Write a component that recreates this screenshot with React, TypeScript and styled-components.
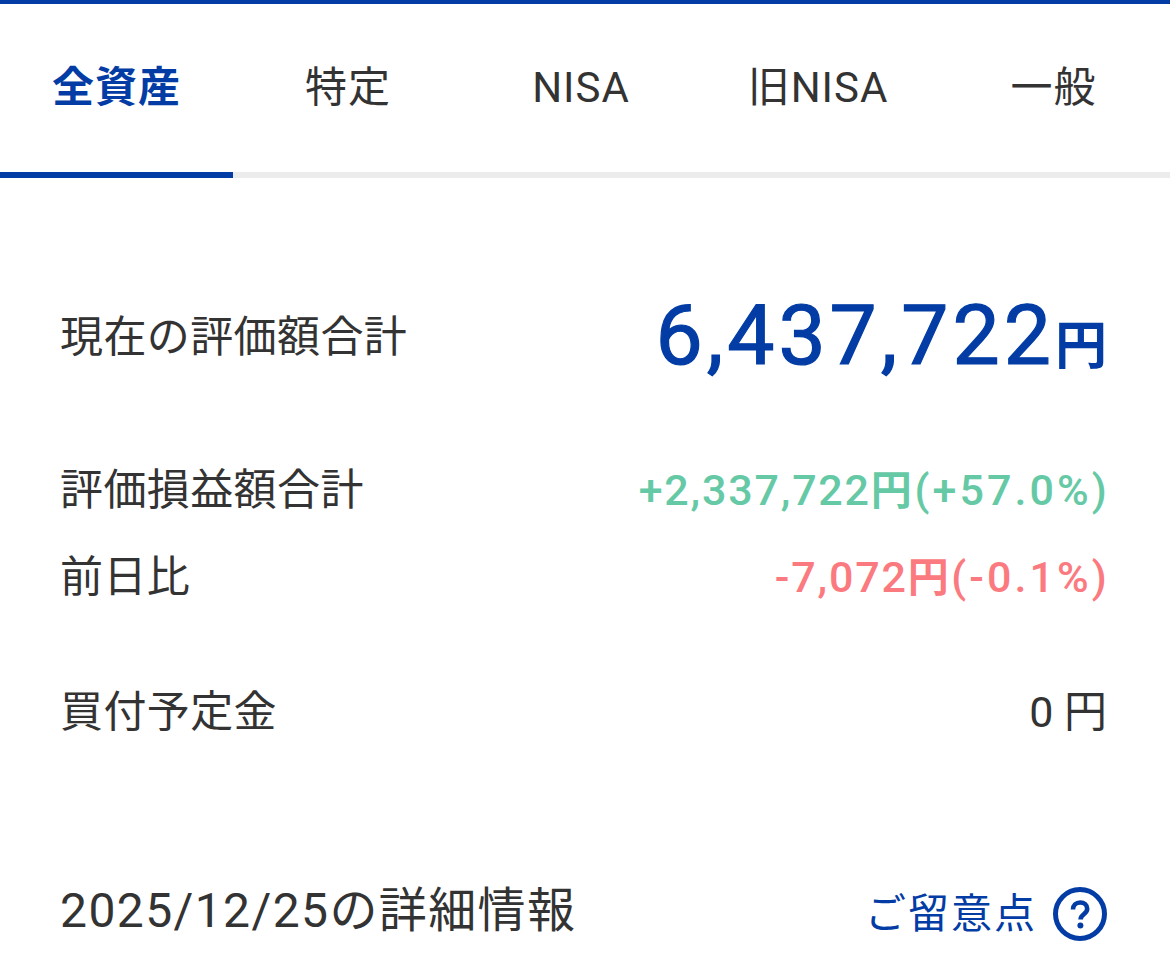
import React from "react";
import styled, { createGlobalStyle } from "styled-components";

const BLUE = "#023ca4";

const tabs = ["全資産", "特定", "NISA", "旧NISA", "一般"];

export default function App() {
  return (
    <Page>
      <GlobalStyle />
      <Tabs>
        {tabs.map((t, i) => (
          <Tab key={t} $active={i === 0}>
            {t}
          </Tab>
        ))}
      </Tabs>
      <Body>
        <TotalRow>
          <Label>現在の評価額合計</Label>
          <Total>
            6,437,722<TotalUnit>円</TotalUnit>
          </Total>
        </TotalRow>
        <GainRow>
          <Label>評価損益額合計</Label>
          <Change $color="#66c9a6">
            +2,337,722<Yen>円</Yen>
            <Percent>(+57.0%)</Percent>
          </Change>
        </GainRow>
        <DayRow>
          <Label>前日比</Label>
          <Change $color="#fb7a80">
            -7,072<Yen>円</Yen>
            <Percent>(-0.1%)</Percent>
          </Change>
        </DayRow>
        <PlanRow>
          <Label>買付予定金</Label>
          <Amount>0 円</Amount>
        </PlanRow>
        <DetailRow>
          <DetailTitle>2025/12/25の詳細情報</DetailTitle>
          <Notice>
            ご留意点
            <HelpIcon>
              <svg width="54" height="54" viewBox="0 0 54 54" fill="none">
                <circle cx="27" cy="27" r="24.5" stroke={BLUE} strokeWidth="5" />
                <path
                  d="M20 22.5c0-4 3-7 7.2-7 4 0 7 2.7 7 6.3 0 5.4-6.6 5.6-6.6 10.6"
                  stroke={BLUE}
                  strokeWidth="4.6"
                />
                <circle cx="27.4" cy="38.6" r="3" fill={BLUE} />
              </svg>
            </HelpIcon>
          </Notice>
        </DetailRow>
      </Body>
    </Page>
  );
}

const GlobalStyle = createGlobalStyle`
  html, body {
    margin: 0;
    padding: 0;
    background: #fff;
  }
`;

const Page = styled.div`
  width: 1170px;
  height: 970px;
  overflow: hidden;
  border-top: 4px solid ${BLUE};
  box-sizing: border-box;
  font-family: Roboto, "Noto Sans CJK JP", sans-serif;
  line-height: 60px;
  color: #333;
`;

const Tabs = styled.div`
  display: grid;
  grid-template-columns: 233px 230px 236px 238px 233px;
  height: 174px;
`;

const Tab = styled.div<{ $active: boolean }>`
  display: flex;
  align-items: center;
  justify-content: center;
  box-sizing: border-box;
  font-size: 42px;
  letter-spacing: 1px;
  font-weight: ${(p) => (p.$active ? 700 : 400)};
  color: ${(p) => (p.$active ? BLUE : "#333")};
  border-bottom: 6px solid ${(p) => (p.$active ? BLUE : "#ececec")};
`;

const Body = styled.div`
  padding: 0 63px 0 60px;
`;

const Row = styled.div`
  display: flex;
  justify-content: space-between;
  align-items: center;
`;

const TotalRow = styled(Row)`
  margin-top: 114px;
  height: 90px;
`;

const GainRow = styled(Row)`
  margin-top: 78px;
  height: 60px;
`;

const DayRow = styled(Row)`
  margin-top: 27px;
  height: 60px;
`;

const PlanRow = styled(Row)`
  margin-top: 75px;
  height: 60px;
`;

const DetailRow = styled(Row)`
  margin-top: 139px;
  height: 60px;
`;

const Label = styled.div`
  font-size: 43px;
  letter-spacing: 0.4px;
`;

const Total = styled.div`
  font-size: 84px;
  font-weight: 400;
  -webkit-text-stroke: 1.2px ${BLUE};
  letter-spacing: 4px;
  line-height: 90px;
  padding-top: 8px;
  color: ${BLUE};
`;

const TotalUnit = styled.span`
  font-size: 52px;
  font-weight: 700;
  letter-spacing: 0;
  -webkit-text-stroke: 0;
`;

const Change = styled.div<{ $color: string }>`
  font-size: 43px;
  font-weight: 500;
  letter-spacing: 1.8px;
  margin-right: -3px;
  color: ${(p) => p.$color};
`;

const Yen = styled.span`
  font-weight: 700;
  font-size: 41px;
  letter-spacing: 2.6px;
`;

const Percent = styled.span`
  letter-spacing: 3.1px;
`;

const Amount = styled.div`
  font-size: 43px;
`;

const DetailTitle = styled.div`
  font-size: 48px;
  letter-spacing: 1.4px;
`;

const Notice = styled.div`
  display: flex;
  align-items: center;
  gap: 16px;
  padding-top: 6px;
  font-size: 41px;
  letter-spacing: 2px;
  color: ${BLUE};
`;

const HelpIcon = styled.span`
  display: flex;
  width: 54px;
  height: 54px;
`;
